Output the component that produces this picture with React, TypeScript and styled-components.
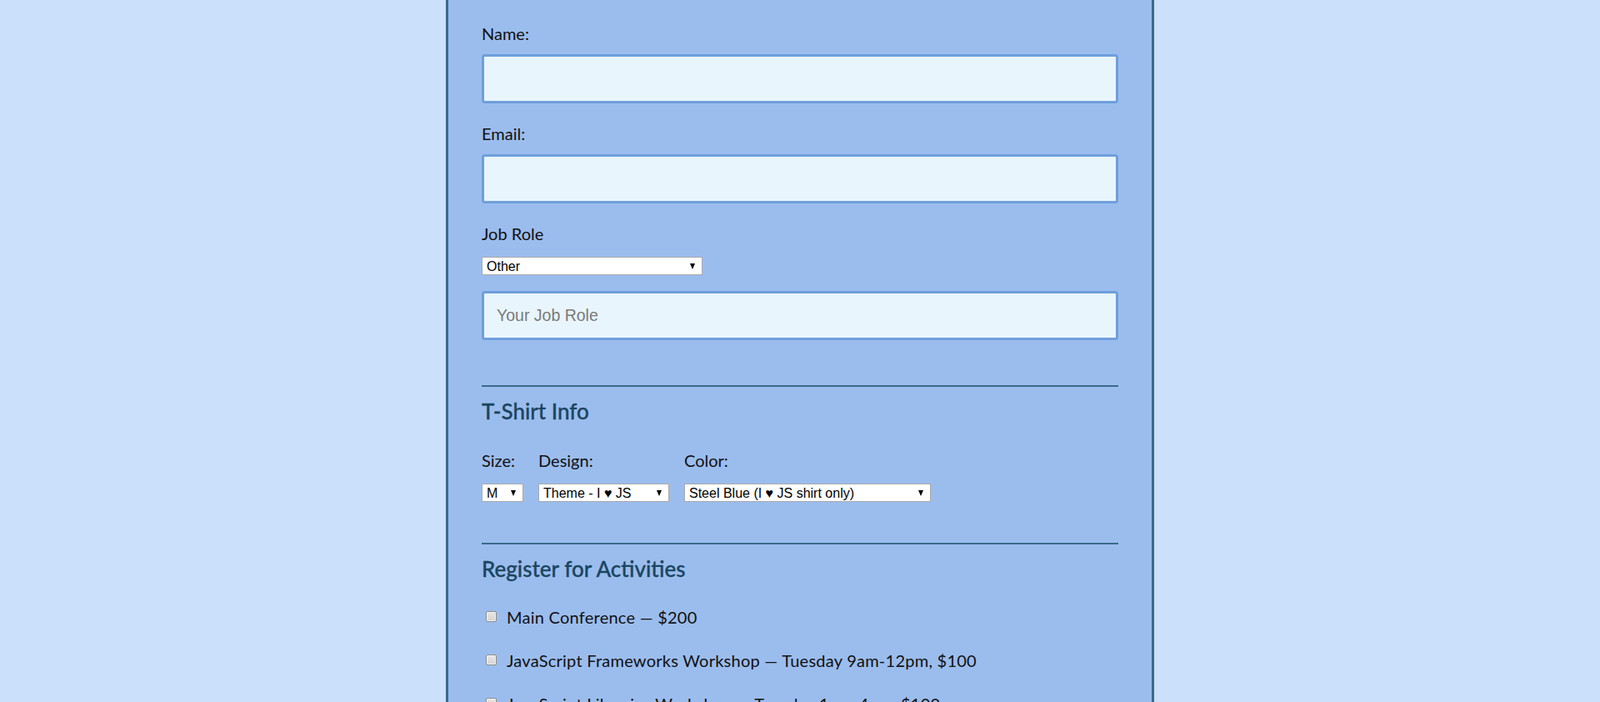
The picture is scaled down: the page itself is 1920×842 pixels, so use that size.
import React from 'react';
import styled, { createGlobalStyle } from 'styled-components';

const GlobalStyle = createGlobalStyle`
  html, body {
    margin: 0;
    padding: 0;
    background: #cbe0fa;
    font-family: Lato, "Open Sans", sans-serif;
    overflow: hidden;
  }
`;

const Page = styled.div`
  display: flex;
  justify-content: center;
  height: 842px;
`;

const Form = styled.form`
  width: 764px;
  padding: 28px 40px 0;
  background: #9bbdee;
  border-left: 3px solid #3a6a8c;
  border-right: 3px solid #3a6a8c;
`;

const Field = styled.div`
  display: flex;
  flex-direction: column;
  margin-bottom: 24px;
`;

const Label = styled.label<{ $gap?: number }>`
  font-size: 20px;
  line-height: 24px;
  color: #111;
  margin-bottom: ${(p) => p.$gap ?? 13}px;
`;

const TextInput = styled.input`
  box-sizing: border-box;
  width: 100%;
  height: 59px;
  padding: 0 15px;
  border: 3px solid #6f9fdc;
  border-radius: 4px;
  background: #e8f5fc;
  font-family: "Liberation Sans", Arial, sans-serif;
  font-size: 19.5px;
  color: #222;
  outline: none;

  &::placeholder {
    color: #7a7a7a;
  }
`;

const SelectWrap = styled.div<{ $width: number }>`
  position: relative;
  width: ${(p) => p.$width}px;

  &::after {
    content: '';
    position: absolute;
    right: 9px;
    top: 7.5px;
    border-left: 3.5px solid transparent;
    border-right: 3.5px solid transparent;
    border-top: 7px solid #000;
    pointer-events: none;
  }
`;

const Select = styled.select`
  appearance: none;
  box-sizing: border-box;
  width: 100%;
  height: 22px;
  margin: 0;
  padding: 0 18px 0 5px;
  border: 1px solid #a9a9a9;
  border-radius: 0;
  background: #fff;
  font-family: "Liberation Sans", Arial, sans-serif;
  font-size: 16px;
  color: #000;
  outline: none;
`;

const Divider = styled.hr<{ $top: number }>`
  height: 2px;
  margin: ${(p) => p.$top}px 0 0;
  border: none;
  background: #3a6a8c;
`;

const Heading = styled.h2`
  margin: 13px 0 0;
  font-size: 26px;
  line-height: 32px;
  font-weight: 500;
  color: #1a4560;
  -webkit-text-stroke: 0.3px #1a4560;
`;

const ShirtRow = styled.div`
  display: flex;
  gap: 18px;
  margin-top: 31px;
`;

const ShirtCol = styled.div`
  display: flex;
  flex-direction: column;
`;

const Activities = styled.div`
  display: flex;
  flex-direction: column;
  gap: 28px;
  margin-top: 30px;
`;

const Activity = styled.label`
  display: flex;
  align-items: center;
  font-size: 20px;
  line-height: 24px;
  letter-spacing: 0.25px;
  color: #111;
`;

const Check = styled.input`
  appearance: none;
  box-sizing: border-box;
  width: 13px;
  height: 13px;
  margin: -2px 12px 0 5px;
  border: 1px solid #8e8e8e;
  border-radius: 2px;
  background: linear-gradient(#e6e6e6, #d4d4d4);
  box-shadow: inset 0 0 0 1px #f2f2f2;
`;

const activities = [
  'Main Conference — $200',
  'JavaScript Frameworks Workshop — Tuesday 9am-12pm, $100',
  'JavaScript Libraries Workshop — Tuesday 1pm-4pm, $100',
];

const App: React.FC = () => {
  return (
    <Page>
      <GlobalStyle />
      <Form>
        <Field>
          <Label htmlFor="name">Name:</Label>
          <TextInput id="name" type="text" />
        </Field>
        <Field>
          <Label htmlFor="mail">Email:</Label>
          <TextInput id="mail" type="email" />
        </Field>
        <Label htmlFor="title" as="div" $gap={16}>Job Role</Label>
        <SelectWrap $width={265}>
          <Select id="title" defaultValue="other">
            <option value="full-stack">Full Stack JavaScript Developer</option>
            <option value="front-end">Front End Developer</option>
            <option value="back-end">Back End Developer</option>
            <option value="designer">Designer</option>
            <option value="student">Student</option>
            <option value="other">Other</option>
          </Select>
        </SelectWrap>
        <TextInput type="text" placeholder="Your Job Role" style={{ marginTop: 19 }} />

        <Divider $top={54} />
        <Heading>T-Shirt Info</Heading>
        <ShirtRow>
          <ShirtCol>
            <Label $gap={16}>Size:</Label>
            <SelectWrap $width={50}>
              <Select defaultValue="medium">
                <option value="small">S</option>
                <option value="medium">M</option>
                <option value="large">L</option>
                <option value="xlarge">XL</option>
              </Select>
            </SelectWrap>
          </ShirtCol>
          <ShirtCol>
            <Label $gap={16}>Design:</Label>
            <SelectWrap $width={157}>
              <Select defaultValue="heart js">
                <option value="js puns">Theme - JS Puns</option>
                <option value="heart js">Theme - I ♥ JS</option>
              </Select>
            </SelectWrap>
          </ShirtCol>
          <ShirtCol>
            <Label $gap={16}>Color:</Label>
            <SelectWrap $width={296}>
              <Select defaultValue="steelblue">
                <option value="tomato">Tomato (I ♥ JS shirt only)</option>
                <option value="steelblue">Steel Blue (I ♥ JS shirt only)</option>
                <option value="dimgrey">Dim Grey (I ♥ JS shirt only)</option>
              </Select>
            </SelectWrap>
          </ShirtCol>
        </ShirtRow>

        <Divider $top={49} />
        <Heading>Register for Activities</Heading>
        <Activities>
          {activities.map((a) => (
            <Activity key={a}>
              <Check type="checkbox" />
              {a}
            </Activity>
          ))}
        </Activities>
      </Form>
    </Page>
  );
};

export default App;
